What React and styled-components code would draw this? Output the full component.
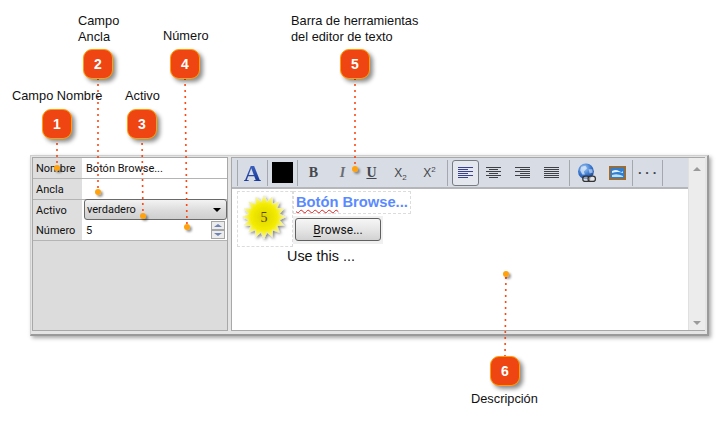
import React from "react";
import styled, { createGlobalStyle } from "styled-components";

const GlobalStyle = createGlobalStyle`
  html, body {
    margin: 0;
    padding: 0;
    background: #fff;
  }
  body {
    font-family: "Liberation Sans", Arial, sans-serif;
  }
`;

const callouts = [
  { n: 1, x: 42, y: 109, from: [57, 138], to: [57, 168] },
  { n: 2, x: 83, y: 49, from: [98, 79], to: [98, 192] },
  { n: 3, x: 127, y: 109, from: [142, 138], to: [143, 216] },
  { n: 4, x: 170, y: 49, from: [185, 79], to: [187, 227] },
  { n: 5, x: 340, y: 49, from: [355, 79], to: [355, 169] },
  { n: 6, x: 490, y: 356, from: [505, 356], to: [506, 274] },
];

const captions = [
  { x: 78, y: 13, text: "Campo\nAncla" },
  { x: 163, y: 28, text: "Número" },
  { x: 291, y: 13, text: "Barra de herramientas\ndel editor de texto" },
  { x: 12, y: 88, text: "Campo Nombre" },
  { x: 125, y: 88, text: "Activo" },
  { x: 471, y: 391, text: "Descripción" },
];

const fields = [
  { label: "Nombre", value: "Botón Browse..." },
  { label: "Ancla", value: "" },
  { label: "Activo", select: "verdadero", short: true },
  { label: "Número", spin: "5" },
];

const Page = styled.div`
  position: relative;
  width: 718px;
  height: 423px;
  overflow: hidden;
  padding: 155px 0 0 30px;
  box-sizing: border-box;
`;

const Frame = styled.div`
  width: 679px;
  height: 181px;
  box-sizing: border-box;
  display: flex;
  gap: 3px;
  padding: 1px 2px 3px 1px;
  background: #e4e4e4;
  border: 1px solid #cfcfcf;
  border-right: 2px solid #9a9a9a;
  border-bottom: 2px solid #9a9a9a;
  box-shadow: 2px 2px 4px rgba(0, 0, 0, 0.35);
`;

const LeftPanel = styled.div`
  width: 196px;
  flex: none;
  box-sizing: border-box;
  background: #dcdcdc;
  border: 1px solid #a8a8a8;
  font-family: Roboto, Tahoma, sans-serif;
  font-size: 11px;
  color: #111;
`;

const Row = styled.div`
  display: grid;
  grid-template-columns: 51px 1fr;
  height: ${(p) => (p.$short ? 20 : 21)}px;
  box-sizing: border-box;
  border-bottom: 1px solid #b4b4b4;
`;

const Label = styled.div`
  display: flex;
  align-items: center;
  padding-left: 3px;
  background: #dedede;
  border-right: 2px solid #fff;
`;

const Value = styled.div`
  display: flex;
  align-items: center;
  padding-left: 2px;
  background: #fff;
  position: relative;
`;

const SelectBox = styled.div`
  flex: 1;
  display: flex;
  align-items: center;
  justify-content: space-between;
  height: 21px;
  margin: -1px 0 0 -2px;
  padding: 0 5px 0 2px;
  border: 1px solid #6a6a6a;
  border-radius: 3px;
  background: linear-gradient(#f3f3f3, #dcdcdc 55%, #cfcfcf);
  box-sizing: border-box;
`;

const Caret = styled.span`
  width: 0;
  height: 0;
  border-left: 4px solid transparent;
  border-right: 4px solid transparent;
  border-top: 4px solid #000;
`;

const Spinner = styled.div`
  margin-left: auto;
  margin-right: 2px;
  display: flex;
  flex-direction: column;
`;

const SpinButton = styled.div`
  width: 14px;
  height: 9px;
  box-sizing: border-box;
  display: flex;
  align-items: center;
  justify-content: center;
  background: #ececec;
  border: 1px solid #a6a6a6;
  &::after {
    content: "";
    border-left: 4px solid transparent;
    border-right: 4px solid transparent;
    ${(p) => (p.$up ? "border-bottom: 3px solid #6f82b4;" : "border-top: 3px solid #6f82b4;")}
  }
`;

const EditorPanel = styled.div`
  flex: 1;
  display: flex;
  box-sizing: border-box;
  background: #fff;
  border: 1px solid #a8a8a8;
  border-right: 0;
  min-width: 0;
`;

const EditorMain = styled.div`
  flex: 1;
  min-width: 0;
  display: flex;
  flex-direction: column;
`;

const Toolbar = styled.div`
  height: 31px;
  box-sizing: border-box;
  flex: none;
  display: flex;
  align-items: center;
  background: #d8dce4;
  border-bottom: 2px solid #b4b6ba;
  padding-left: 5px;
`;

const Sep = styled.span`
  width: 1px;
  height: 26px;
  flex: none;
  background: #a4a8ae;
  margin: ${(p) => p.$margin || "0"};
`;

const FontA = styled.span`
  width: 29px;
  text-align: center;
  font: bold 24px "Liberation Serif", serif;
  line-height: 26px;
  background: linear-gradient(#4a70c8, #0c2a90);
  -webkit-background-clip: text;
  background-clip: text;
  color: transparent;
`;

const Swatch = styled.span`
  width: 21px;
  height: 21px;
  flex: none;
  background: #000;
  margin: 0 4px;
`;

const ToolButton = styled.span`
  width: ${(p) => p.$w || 29}px;
  height: 26px;
  flex: none;
  display: flex;
  align-items: center;
  justify-content: center;
  box-sizing: border-box;
  color: ${(p) => (p.$italic ? "#6a6d73" : "#44474d")};
  font-family: "Liberation Serif", serif;
  font-size: 14px;
  font-weight: ${(p) => (p.$bold ? "bold" : "normal")};
  font-style: ${(p) => (p.$italic ? "italic" : "normal")};
  text-decoration: ${(p) => (p.$under ? "underline" : "none")};
  ${(p) => p.$active && "border: 1px solid #777b82; border-radius: 3px; background: #e4e7ee;"}
  sub, sup {
    font-size: 8px;
    line-height: 0;
  }
`;

const Script = styled.span`
  font-family: "Liberation Sans", sans-serif;
  font-size: 12px;
`;

const MoreDots = styled.span`
  font-family: "Liberation Sans", sans-serif;
  font-size: 13px;
  font-weight: bold;
  letter-spacing: 3px;
  margin-left: 3px;
`;

const AlignLines = styled.span`
  display: flex;
  flex-direction: column;
  gap: 1px;
  width: 15px;
  align-items: ${(p) => p.$align};
`;

const AlignLine = styled.i`
  display: block;
  height: 1px;
  width: ${(p) => p.$w}px;
  background: ${(p) => (p.$blue ? "#39418f" : "#3e4046")};
`;

const Content = styled.div`
  flex: 1;
  padding: 2px 0 0 5px;
`;

const ContentTop = styled.div`
  display: flex;
  align-items: flex-start;
`;

const StarCell = styled.div`
  width: 56px;
  height: 56px;
  box-sizing: border-box;
  border: 1px dashed #dcdcdc;
  padding: 0 2px 4px 0;
  display: flex;
  align-items: center;
  justify-content: center;
`;

const ContentRight = styled.div`
  display: flex;
  flex-direction: column;
  gap: 2px;
`;

const Heading = styled.div`
  width: 118px;
  height: 23px;
  box-sizing: border-box;
  border: 1px dashed #dcdcdc;
  padding-left: 2px;
  font-size: 14.7px;
  font-weight: bold;
  line-height: 20px;
  color: #5a8aff;
  white-space: nowrap;
`;

const Squiggle = styled.span`
  text-decoration: underline wavy #e02020 1px;
  text-underline-offset: 2px;
`;

const ButtonArea = styled.div`
  width: 90px;
  height: 28px;
  box-sizing: border-box;
  padding: 2px;
  background: #f0f0f0;
`;

const BrowseButton = styled.div`
  width: 86px;
  height: 23px;
  box-sizing: border-box;
  border: 1px solid #606060;
  border-radius: 3px;
  background: linear-gradient(#f6f6f6, #e6e6e6 50%, #d2d2d2);
  display: flex;
  align-items: center;
  justify-content: center;
  font-family: Roboto, Tahoma, sans-serif;
  font-size: 12px;
  color: #111;
  u {
    text-underline-offset: 2px;
  }
`;

const UseThis = styled.div`
  margin: 0 0 0 50px;
  font-size: 14.4px;
  line-height: 18px;
  color: #111;
`;

const Scrollbar = styled.div`
  width: 17px;
  flex: none;
  background: #ececec;
  border-left: 1px solid #e0e0e0;
  display: flex;
  flex-direction: column;
  justify-content: space-between;
  align-items: center;
  padding: 9px 0 5px;
  box-sizing: border-box;
`;

const ScrollArrow = styled.span`
  border-left: 4px solid transparent;
  border-right: 4px solid transparent;
  ${(p) => (p.$up ? "border-bottom: 4px solid #9a9a9a;" : "border-top: 4px solid #9a9a9a;")}
`;

const Overlay = styled.svg`
  position: absolute;
  left: 0;
  top: 0;
  pointer-events: none;
`;

const Badge = styled.div`
  position: absolute;
  left: ${(p) => p.$x}px;
  top: ${(p) => p.$y}px;
  width: 30px;
  height: 30px;
  box-sizing: border-box;
  border: 1px solid #ffa000;
  border-radius: 9px;
  background: #ee4512;
  color: #fff;
  font-size: 14px;
  font-weight: bold;
  display: flex;
  align-items: center;
  justify-content: center;
  box-shadow: 3px 3px 4px rgba(0, 0, 0, 0.45);
`;

const Caption = styled.div`
  position: absolute;
  left: ${(p) => p.$x}px;
  top: ${(p) => p.$y}px;
  font-size: 12.8px;
  line-height: 16px;
  color: #111;
  white-space: pre;
`;

const starPoints = () => {
  const pts = [];
  for (let i = 0; i < 32; i++) {
    const r = i % 2 === 0 ? 21.5 : 15.5;
    const a = (i / 32) * Math.PI * 2;
    pts.push(`${(25 + r * Math.cos(a)).toFixed(1)},${(25 + r * Math.sin(a)).toFixed(1)}`);
  }
  return pts.join(" ");
};

const Star = () => (
  <svg width="50" height="50" viewBox="0 0 50 50">
    <defs>
      <radialGradient id="starFill" cx="50%" cy="50%" r="50%">
        <stop offset="0%" stopColor="#dcd400" />
        <stop offset="60%" stopColor="#f4ec00" />
        <stop offset="100%" stopColor="#fbf8a8" />
      </radialGradient>
      <filter id="starShadow" x="-20%" y="-20%" width="150%" height="150%">
        <feDropShadow dx="1.5" dy="1.5" stdDeviation="1.5" floodColor="#000" floodOpacity="0.5" />
      </filter>
    </defs>
    <polygon points={starPoints()} fill="url(#starFill)" stroke="#efefc0" strokeWidth="0.6" filter="url(#starShadow)" />
    <text x="25" y="30" textAnchor="middle" fontFamily="Liberation Serif, serif" fontSize="14" fill="#5e4400">
      5
    </text>
  </svg>
);

const GlobeLink = () => (
  <svg width="20" height="20" viewBox="0 0 19 19">
    <defs>
      <radialGradient id="globeFill" cx="40%" cy="30%" r="70%">
        <stop offset="0%" stopColor="#a8cdf5" />
        <stop offset="60%" stopColor="#3a78d0" />
        <stop offset="100%" stopColor="#1c4a9c" />
      </radialGradient>
    </defs>
    <circle cx="8.5" cy="8" r="7.5" fill="url(#globeFill)" />
    <path d="M4 3.5 L8 2.5 L9.5 5 L6.5 8 L7.5 11 L5 11 L3 7 Z" fill="#dce9f8" opacity="0.75" />
    <path d="M11 6 L14.5 6 L15 9 L12 10 Z" fill="#dce9f8" opacity="0.6" />
    <rect x="5.5" y="12.5" width="6.5" height="5" rx="2.4" fill="#eee" fillOpacity="0.5" stroke="#333" strokeWidth="1.2" />
    <rect x="10.5" y="12.5" width="7" height="5" rx="2.4" fill="#eee" fillOpacity="0.5" stroke="#333" strokeWidth="1.2" />
  </svg>
);

const PictureIcon = () => (
  <svg width="17" height="14" viewBox="0 0 17 14">
    <rect x="0.8" y="0.8" width="15.4" height="12.4" fill="#2f7ed0" stroke="#a86a20" strokeWidth="1.6" />
    <path d="M3 5 Q7 3 10 5 T14 5 L14 7 Q9 5 3 7 Z" fill="#e2f0fb" />
    <path d="M3 9 Q8 7 14 10 L14 11 L3 11 Z" fill="#bfe0f7" />
  </svg>
);

const Lines = ({ align, widths, blue }) => (
  <AlignLines $align={align}>
    {widths.map((w, i) => (
      <AlignLine key={i} $w={w} $blue={blue} />
    ))}
  </AlignLines>
);

const App = () => {
  return (
    <Page>
      <GlobalStyle />
      <Frame>
        <LeftPanel>
          {fields.map((f) => (
            <Row key={f.label} $short={f.short}>
              <Label>{f.label}</Label>
              <Value>
                {f.value}
                {f.select && (
                  <SelectBox>
                    {f.select}
                    <Caret />
                  </SelectBox>
                )}
                {f.spin && (
                  <>
                    {f.spin}
                    <Spinner>
                      <SpinButton $up />
                      <SpinButton />
                    </Spinner>
                  </>
                )}
              </Value>
            </Row>
          ))}
        </LeftPanel>
        <EditorPanel>
          <EditorMain>
            <Toolbar>
              <Sep />
              <FontA>A</FontA>
              <Sep />
              <Swatch />
              <Sep $margin="0 1px 0 0" />
              <ToolButton $w={29} $bold>B</ToolButton>
              <ToolButton $w={29} $bold $italic>I</ToolButton>
              <ToolButton $w={29} $bold $under>U</ToolButton>
              <ToolButton $w={29}>
                <Script>
                  X<sub>2</sub>
                </Script>
              </ToolButton>
              <ToolButton $w={29}>
                <Script>
                  X<sup>2</sup>
                </Script>
              </ToolButton>
              <Sep $margin="0 4px 0 3px" />
              <ToolButton $w={27} $active>
                <Lines align="flex-start" widths={[15, 10, 15, 10, 15, 10]} blue />
              </ToolButton>
              <ToolButton $w={29}>
                <Lines align="center" widths={[15, 9, 15, 9, 15, 9]} />
              </ToolButton>
              <ToolButton $w={29}>
                <Lines align="flex-end" widths={[15, 10, 15, 10, 15, 10]} />
              </ToolButton>
              <ToolButton $w={29}>
                <Lines align="center" widths={[15, 15, 15, 15, 15, 15]} />
              </ToolButton>
              <Sep $margin="0 0 0 3px" />
              <ToolButton $w={33}>
                <GlobeLink />
              </ToolButton>
              <ToolButton $w={29}>
                <PictureIcon />
              </ToolButton>
              <Sep />
              <ToolButton $w={29}>
                <MoreDots>···</MoreDots>
              </ToolButton>
              <Sep />
            </Toolbar>
            <Content>
              <ContentTop>
                <StarCell>
                  <Star />
                </StarCell>
                <ContentRight>
                  <Heading>
                    <Squiggle>Botón</Squiggle> Browse...
                  </Heading>
                  <ButtonArea>
                    <BrowseButton>
                      <span>
                        <u>B</u>rowse...
                      </span>
                    </BrowseButton>
                  </ButtonArea>
                </ContentRight>
              </ContentTop>
              <UseThis>Use this ...</UseThis>
            </Content>
          </EditorMain>
          <Scrollbar>
            <ScrollArrow $up />
            <ScrollArrow />
          </Scrollbar>
        </EditorPanel>
      </Frame>

      <Overlay width="718" height="423">
        <defs>
          <filter id="dotShadow" x="-50%" y="-50%" width="250%" height="250%">
            <feDropShadow dx="2" dy="2" stdDeviation="1" floodColor="#000" floodOpacity="0.4" />
          </filter>
        </defs>
        {callouts.map((c) => (
          <g key={c.n}>
            <line
              x1={c.from[0]}
              y1={c.from[1]}
              x2={c.to[0]}
              y2={c.to[1]}
              stroke="#ff3a00"
              strokeWidth="2"
              strokeLinecap="round"
              strokeDasharray="0.1 5.9"
            />
            <circle cx={c.to[0]} cy={c.to[1]} r="3" fill="#ffa20d" filter="url(#dotShadow)" />
          </g>
        ))}
      </Overlay>

      {callouts.map((c) => (
        <Badge key={c.n} $x={c.x} $y={c.y}>
          {c.n}
        </Badge>
      ))}
      {captions.map((c) => (
        <Caption key={c.text} $x={c.x} $y={c.y}>
          {c.text}
        </Caption>
      ))}
    </Page>
  );
};

export default App;
